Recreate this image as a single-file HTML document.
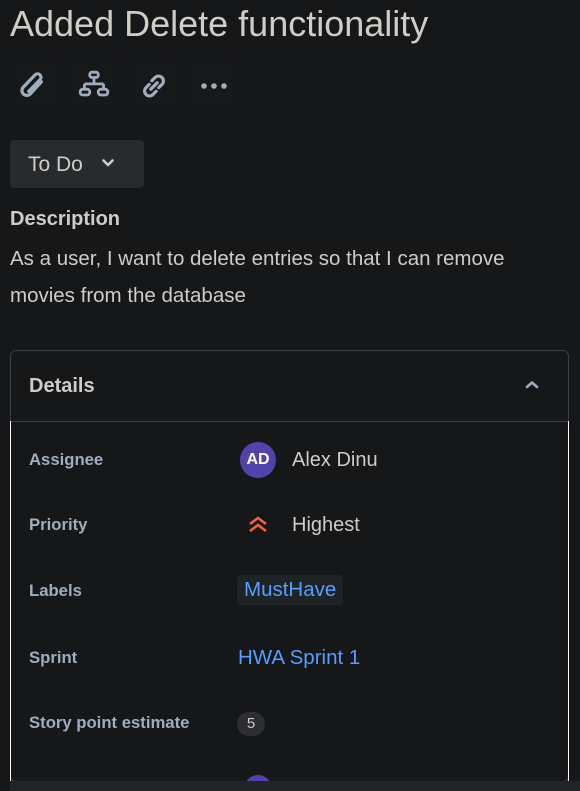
<!DOCTYPE html>
<html><head><meta charset="utf-8"><style>
html,body{margin:0;width:580px;height:791px;overflow:hidden}
body{background:#161719;font-family:"Liberation Sans",sans-serif;color:#cfccc7;position:relative}
.a{position:absolute}
h1{position:absolute;left:10px;top:3px;margin:0;font-weight:400;font-size:36px;color:#d0ccc6;white-space:nowrap}
.ib{position:absolute;top:62px;width:46px;height:46px;border-radius:4px;background:#17181a}
.btn{position:absolute;left:10px;top:140px;width:134px;height:48px;background:#282b2e;border-radius:4px}
.lbl{position:absolute;left:29px;font-size:16.7px;font-weight:700;color:#9fadbc}
.val{position:absolute;left:292px;font-size:20px;color:#cfccc7}
</style></head><body>
<h1>Added Delete functionality</h1>
<div class="ib" style="left:10px"></div><div class="ib" style="left:70px"></div><div class="ib" style="left:130px"></div><div class="ib" style="left:190px"></div>
<svg class="a" style="left:17px;top:69px" width="34" height="34" viewBox="0 0 32 32" fill="none" stroke="#9fadbc" stroke-width="3" stroke-linecap="round"><path d="M23 12 L12.5 23.5 a4.5 4.5 0 0 1 -6.5 -6.5 L17 5.5 a3.2 3.2 0 0 1 4.6 4.6 L11 21"/></svg>
<svg class="a" style="left:77px;top:69px" width="34" height="34" viewBox="0 0 32 32" fill="none" stroke="#9fadbc" stroke-width="2.6"><rect x="12" y="3" width="8" height="5" rx="2"/><path d="M16 8v6M7 14h18M7 14v5M25 14v5"/><rect x="3" y="19" width="9" height="5.5" rx="2.5"/><rect x="20" y="19" width="9" height="5.5" rx="2.5"/></svg>
<svg class="a" style="left:137px;top:69px" width="34" height="34" viewBox="0 0 32 32" fill="none" stroke="#9fadbc" stroke-width="3" stroke-linecap="round"><path d="M14 11l3-3a4.5 4.5 0 0 1 6.5 6.5l-3 3M18 21l-3 3a4.5 4.5 0 0 1-6.5-6.5l3-3M13 19l6-6"/></svg>
<svg class="a" style="left:198px;top:78px" width="32" height="16" viewBox="0 0 32 16" fill="#9fadbc"><circle cx="6" cy="8" r="2.8"/><circle cx="16" cy="8" r="2.8"/><circle cx="26" cy="8" r="2.8"/></svg>
<div class="btn"></div>
<div class="a" style="left:28px;top:153px;font-size:21px;color:#cfccc7">To Do</div>
<svg class="a" style="left:101px;top:158px" width="14" height="10" viewBox="0 0 14 10" fill="none" stroke="#cfccc7" stroke-width="2.6" stroke-linecap="round" stroke-linejoin="round"><path d="M2.5 2.5L7 7L11.5 2.5"/></svg>
<div class="a" style="left:10px;top:208px;font-size:20px;font-weight:700;color:#cfccc7">Description</div>
<div class="a" style="left:10px;top:240px;font-size:20.5px;line-height:37px;color:#cfccc7;width:570px">As a user, I want to delete entries so that I can remove<br>movies from the database</div>
<div class="a" style="left:10px;top:350px;width:557px;height:430px;border:1px solid #3a3d41;border-radius:6px"></div>
<div class="a" style="left:10px;top:421px;width:1px;height:370px;background:#fff"></div>
<div class="a" style="left:568px;top:421px;width:1px;height:370px;background:#fff"></div>
<div class="a" style="left:11px;top:421px;width:557px;height:1px;background:#3a3d41"></div>
<div class="a" style="left:29px;top:375px;font-size:20px;font-weight:700;color:#cfccc7">Details</div>
<svg class="a" style="left:524px;top:379px" width="16" height="12" viewBox="0 0 16 12" fill="none" stroke="#9fadbc" stroke-width="2.6" stroke-linecap="round" stroke-linejoin="round"><path d="M3 8L8 3.5L13 8"/></svg>
<div class="lbl" style="top:450px">Assignee</div>
<div class="lbl" style="top:515px">Priority</div>
<div class="lbl" style="top:581px">Labels</div>
<div class="lbl" style="top:648px">Sprint</div>
<div class="lbl" style="top:713px">Story point estimate</div>
<div class="a" style="left:240px;top:442px;width:36px;height:36px;border-radius:50%;background:#5243aa;color:#fff;font-size:16px;font-weight:700;text-align:center;line-height:36px">AD</div>
<div class="val" style="top:449px">Alex Dinu</div>
<svg class="a" style="left:248px;top:515px" width="20" height="18" viewBox="0 0 20 18" fill="none" stroke="#f5623a" stroke-width="2.6"><path d="M2 9L10 3L18 9M2 16L10 10L18 16"/></svg>
<div class="val" style="top:514px">Highest</div>
<div class="a" style="left:237px;top:575px;width:106px;height:30px;background:#1e2326;border-radius:3px"></div>
<div class="a" style="left:244px;top:578px;font-size:20.5px;color:#579dff">MustHave</div>
<div class="a" style="left:238px;top:646px;font-size:20.5px;color:#579dff">HWA Sprint 1</div>
<div class="a" style="left:237px;top:712px;width:28px;height:24px;border-radius:12px;background:#2c2e31;color:#cfccc7;font-size:15px;text-align:center;line-height:24px">5</div>
<div class="a" style="left:244px;top:775px;width:28px;height:28px;border-radius:50%;background:#5243aa"></div>
<div class="a" style="left:10px;top:781px;width:570px;height:10px;background:#222427"></div>
</body></html>
